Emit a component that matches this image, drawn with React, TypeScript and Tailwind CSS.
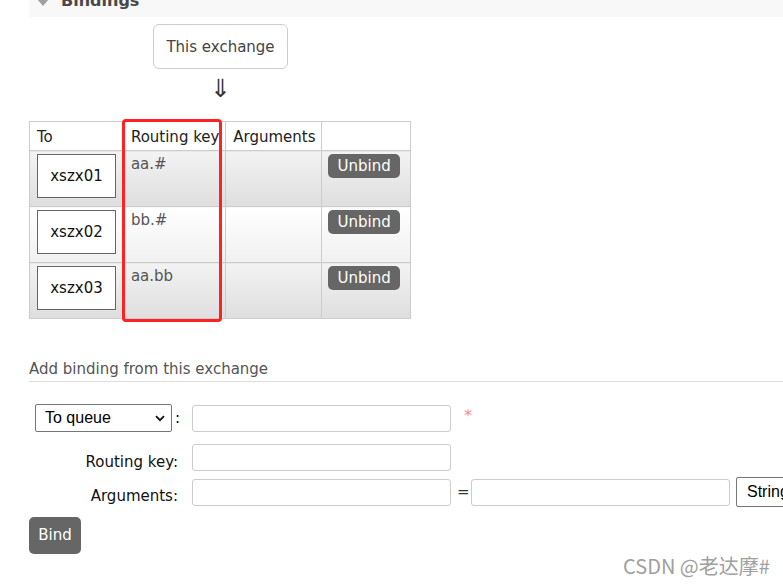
import * as React from "react";

const rows = [
  { queue: "xszx01", key: "aa.#", alt: false },
  { queue: "xszx02", key: "bb.#", alt: true },
  { queue: "xszx03", key: "aa.bb", alt: false },
];

function Chevron() {
  return (
    <svg width="10" height="7" viewBox="0 0 10 7" className="shrink-0">
      <path d="M1 1.2 L5 5.2 L9 1.2" fill="none" stroke="#111" strokeWidth="1.8" />
    </svg>
  );
}

export default function App() {
  return (
    <div className="relative h-[584px] w-[783px] overflow-hidden bg-white font-['DejaVu_Sans',Verdana,sans-serif] text-[15px] text-[#444]">
      {/* section header, scrolled partly off the top */}
      <div className="ml-[29px] h-[17px] overflow-hidden bg-[#f8f8f8]">
        <div className="-mt-[11px] flex items-center">
          <span className="ml-[8px] mt-[2px] h-0 w-0 border-x-[6px] border-t-[7px] border-x-transparent border-t-[#a0a0a0]" />
          <span className="ml-[12px] text-[16px] font-bold leading-[24px] text-[#484848]">Bindings</span>
        </div>
      </div>

      <div className="pl-[29px]">
        <div className="ml-[124px] mt-[7px] flex h-[45px] w-[135px] items-center justify-center rounded-[6px] border border-[#ccc] pt-[2px] text-[15px] text-[#444]">
          This exchange
        </div>
        <div className="ml-[124px] mt-[6px] w-[135px] text-center text-[25px] leading-[28px] text-[#333]">⇓</div>

        <div className="relative mt-[18px] w-[382px]">
          <table className="border-collapse text-[15px]">
            <thead>
              <tr className="h-[29px]">
                <th className="w-[93px] border border-[#ccc] pl-[7px] pt-[2px] text-left font-normal text-[#222]">To</th>
                <th className="w-[104px] border border-[#ccc] pl-[8px] pt-[2px] text-left font-normal text-[#222]">Routing key</th>
                <th className="w-[96px] border border-[#ccc] pl-[7px] pt-[2px] text-left font-normal text-[#222]">Arguments</th>
                <th className="w-[89px] border border-[#ccc]" />
              </tr>
            </thead>
            <tbody>
              {rows.map((r) => {
                const bg = r.alt
                  ? "bg-[linear-gradient(#ffffff,#f0f0f0)]"
                  : "bg-[linear-gradient(#f3f3f3,#dedede)]";
                return (
                  <tr key={r.queue} className="h-[56px]">
                    <td className={`border border-[#ccc] pl-[7px] align-top ${bg}`}>
                      <div className="mt-[3px] flex h-[44px] w-[79px] items-center justify-center border border-[#666] bg-white text-[#111]">
                        {r.queue}
                      </div>
                    </td>
                    <td className={`border border-[#ccc] pl-[8px] pt-[4px] align-top leading-[18px] text-[#555] ${bg}`}>{r.key}</td>
                    <td className={`border border-[#ccc] ${bg}`} />
                    <td className={`border border-[#ccc] pl-[6px] align-top ${bg}`}>
                      <button className="mt-[3px] h-[24px] w-[72px] rounded-[5px] bg-[#666] text-[15px] leading-[24px] text-white">Unbind</button>
                    </td>
                  </tr>
                );
              })}
            </tbody>
          </table>
          <div className="absolute left-[93px] top-[-2px] h-[203px] w-[100px] rounded-[4px] border-[3px] border-[#ff2222]" />
        </div>

        <div className="mt-[41px] border-b border-[#ddd] pb-[3px] leading-[18px] text-[#555]">Add binding from this exchange</div>

        <div className="mt-[22px] flex items-center">
          <div className="flex w-[163px] shrink-0 items-center">
            <div className="ml-[6px] flex h-[28px] w-[137px] shrink-0 items-center justify-between rounded-[2px] border border-[#767676] pl-[9px] pr-[6px] font-['Liberation_Sans',Arial,sans-serif] text-[16px] text-black">
              To queue
              <Chevron />
            </div>
            <span className="ml-[3px] text-black">:</span>
          </div>
          <div className="h-[27px] w-[259px] shrink-0 rounded-[3px] border border-[#ccc]" />
          <span className="ml-[13px] -mt-[4px] text-[16px] leading-[16px] text-[#f88]">*</span>
        </div>

        <div className="mt-[12px] flex items-center">
          <div className="w-[149px] shrink-0 pt-[8px] text-right leading-[18px] text-[#111]">Routing key:</div>
          <div className="ml-[14px] h-[27px] w-[259px] shrink-0 rounded-[3px] border border-[#ccc]" />
        </div>

        <div className="mt-[6px] flex items-center">
          <div className="w-[149px] shrink-0 pt-[8px] text-right leading-[18px] text-[#111]">Arguments:</div>
          <div className="ml-[14px] h-[27px] w-[259px] shrink-0 rounded-[3px] border border-[#ccc]" />
          <span className="ml-[6px] w-[14px] shrink-0 text-[#333]">=</span>
          <div className="h-[27px] w-[259px] shrink-0 rounded-[3px] border border-[#ccc]" />
          <div className="ml-[6px] flex h-[30px] w-[80px] shrink-0 items-center rounded-[2px] border border-[#767676] pl-[10px] font-['Liberation_Sans',Arial,sans-serif] text-[16px] text-black">
            String
          </div>
        </div>

        <button className="mt-[10px] h-[37px] w-[52px] rounded-[5px] bg-[#666] text-[15px] text-white">Bind</button>
      </div>

      <div className="absolute left-[623px] top-[554px] font-['Noto_Sans_CJK_SC','Noto_Sans',sans-serif] text-[20px] leading-[24px] text-[#a0a0a0]">
        CSDN @老达摩#
      </div>
    </div>
  );
}
